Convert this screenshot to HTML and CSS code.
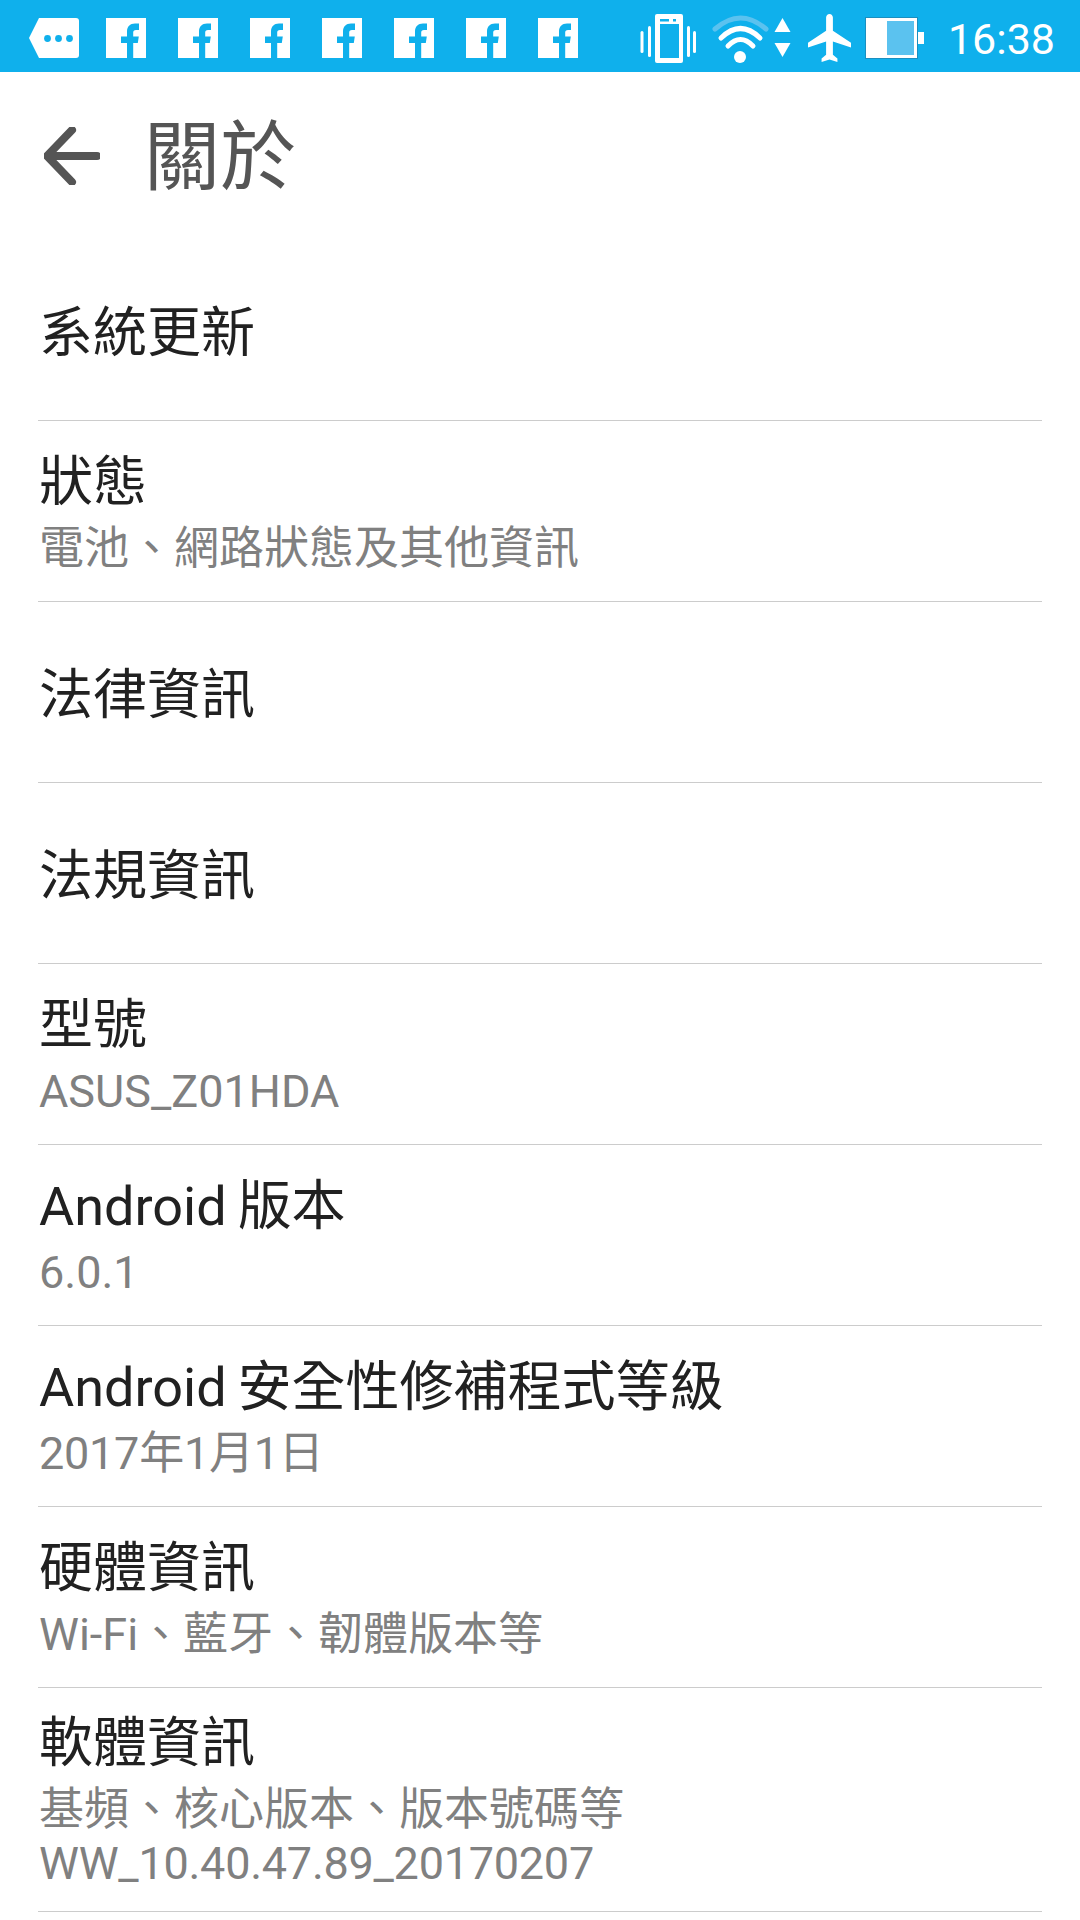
FILE: index.html
```html
<!DOCTYPE html>
<html lang="zh-Hant">
<head>
<meta charset="utf-8">
<title>關於</title>
<link rel="stylesheet" href="styles.css">
</head>
<body>
<svg class="defs" width="0" height="0">
    <symbol id="fb" viewBox="0 0 40 40">
        <rect width="40" height="40" fill="#fff"/>
        <path d="M21 40V25h-6v-6.500h6v-5c0-5 3-8 8-8h4v6.500h-3c-2 0-2.800 1-2.800 2.500v4h5.600l-1 6.500h-4.600v15z" fill="#0fb0ec"/>
    </symbol>
</svg>

<div id="statusbar">
    <div class="notify">
        <svg class="tag" width="50" height="40" viewBox="0 0 50 40">
            <path d="M10 0H47a3 3 0 0 1 3 3V37a3 3 0 0 1-3 3H10L0 20z" fill="#fff"/>
            <circle cx="18.500" cy="20.500" r="3.400" fill="#0fb0ec"/>
            <circle cx="29.500" cy="20.500" r="3.400" fill="#0fb0ec"/>
            <circle cx="40.500" cy="20.500" r="3.400" fill="#0fb0ec"/>
        </svg>
        <svg class="fb" width="40" height="40"><use href="#fb"/></svg>
        <svg class="fb" width="40" height="40"><use href="#fb"/></svg>
        <svg class="fb" width="40" height="40"><use href="#fb"/></svg>
        <svg class="fb" width="40" height="40"><use href="#fb"/></svg>
        <svg class="fb" width="40" height="40"><use href="#fb"/></svg>
        <svg class="fb" width="40" height="40"><use href="#fb"/></svg>
        <svg class="fb" width="40" height="40"><use href="#fb"/></svg>
    </div>
    <div class="system">
        <svg class="vibrate" width="56" height="49" viewBox="0 0 56 49">
            <rect x="15" y="0" width="28" height="49" rx="2" fill="#fff"/>
            <rect x="20" y="10" width="19" height="34" fill="#0fb0ec"/>
            <rect x="20" y="5" width="9" height="2.500" fill="#0fb0ec"/>
            <rect x="33" y="5" width="3" height="2.500" fill="#0fb0ec"/>
            <rect x="0.500" y="17" width="3" height="22" rx="1.500" fill="#fff"/>
            <rect x="8" y="12" width="3" height="31" rx="1.500" fill="#fff"/>
            <rect x="47" y="12" width="3" height="31" rx="1.500" fill="#fff"/>
            <rect x="53" y="17" width="3" height="22" rx="1.500" fill="#fff"/>
        </svg>
        <svg class="wifi" width="57" height="49" viewBox="0 0 57 49">
            <path d="M3 15Q28.500 -7 54 15" fill="none" stroke="#5bc2ef" stroke-width="5" stroke-linecap="round"/>
            <path d="M9 24Q28.500 5 48 24" fill="none" stroke="#fff" stroke-width="5" stroke-linecap="round"/>
            <path d="M16 32Q28.500 19 41 32" fill="none" stroke="#fff" stroke-width="5" stroke-linecap="round"/>
            <circle cx="28" cy="43" r="6" fill="#fff"/>
        </svg>
        <svg class="arrows" width="17" height="40" viewBox="0 0 17 40">
            <path d="M8.500 0L16.500 14H0.500z" fill="#fff"/>
            <path d="M0.500 25H16.500L8.500 39z" fill="#fff"/>
        </svg>
        <svg class="plane" width="43" height="48" viewBox="2 2 19 20" preserveAspectRatio="none">
            <path d="M21 16v-2l-8-5V3.500c0-.83-.67-1.500-1.500-1.500S10 2.670 10 3.500V9l-8 5v2l8-2.500V19l-2 1.500V22l3.500-1 3.500 1v-1.500L13 19v-5.500l8 2.500z" fill="#fff"/>
        </svg>
        <svg class="battery" width="59" height="42" viewBox="0 0 59 42">
            <rect x="0.500" y="0.500" width="52" height="41" fill="#fff" stroke="#1a8fc0"/>
            <rect x="22" y="4" width="27" height="34" fill="#5bc2ef"/>
            <rect x="53" y="15" width="6" height="12" fill="#fff"/>
        </svg>
        <span class="clock">16:38</span>
    </div>
</div>

<div id="header">
    <svg class="back" width="56" height="58" viewBox="0 0 56 58">
        <path d="M53 29H5M28 3L3 29l25 26" fill="none" stroke="#555" stroke-width="8" stroke-linecap="round" stroke-linejoin="round"/>
    </svg>
    <h1>關於</h1>
</div>

<div id="list">
    <div class="row"><p class="name">系統更新</p></div>
    <div class="row"><p class="name">狀態</p><p class="info">電池、網路狀態及其他資訊</p></div>
    <div class="row"><p class="name">法律資訊</p></div>
    <div class="row"><p class="name">法規資訊</p></div>
    <div class="row"><p class="name">型號</p><p class="info">ASUS_Z01HDA</p></div>
    <div class="row"><p class="name">Android 版本</p><p class="info">6.0.1</p></div>
    <div class="row"><p class="name">Android 安全性修補程式等級</p><p class="info tight">2017年1月1日</p></div>
    <div class="row"><p class="name">硬體資訊</p><p class="info">Wi-Fi、藍牙、韌體版本等</p></div>
    <div class="row tall"><p class="name">軟體資訊</p><p class="info">基頻、核心版本、版本號碼等</p><p class="info tight">WW_10.40.47.89_20170207</p></div>
</div>
</body>
</html>
```

FILE: styles.css
```css
body {
    margin: 0;
    background: #fff;
    font-family: Roboto, "Noto Sans CJK TC", sans-serif;
}

p, h1 {
    margin: 0;
    font-weight: normal;
}

.defs {
    position: absolute;
}

#statusbar {
    display: flex;
    justify-content: space-between;
    align-items: center;
    box-sizing: border-box;
    height: 72px;
    padding: 4px 25px 0 29px;
    background: #0fb0ec;
    color: #fff;
}

.notify {
    display: flex;
    gap: 32px;
    align-items: center;
}

.tag {
    margin-right: -5px;
}

.system {
    display: flex;
    align-items: center;
}

.vibrate { margin-right: 16px; }
.wifi { margin-right: 5px; }
.arrows { margin-right: 17px; }
.plane { margin-right: 14px; }
.battery { margin-right: 24px; }

.clock {
    margin-top: 2px;
    font-size: 43px;
    line-height: 48px;
}

#header {
    display: flex;
    align-items: center;
    height: 168px;
    padding-left: 44px;
}

.back {
    margin-right: 44px;
}

h1 {
    margin-top: 4px;
    font-size: 76px;
    line-height: 90px;
    color: #555;
}

#list {
    margin: 0 38px;
}

.row {
    display: flex;
    flex-direction: column;
    justify-content: center;
    box-sizing: border-box;
    height: 181px;
    padding: 7px 0 0 1px;
    border-bottom: 1px solid #ccc;
}

.row.tall {
    height: 224px;
}

.name {
    font-size: 54px;
    line-height: 78px;
    word-spacing: -2.500px;
    color: #212121;
}

.info {
    font-size: 45px;
    line-height: 54px;
    color: #808080;
}

.info:last-child {
    margin-bottom: 10px;
}

.tight {
    letter-spacing: -0.25px;
}
```
